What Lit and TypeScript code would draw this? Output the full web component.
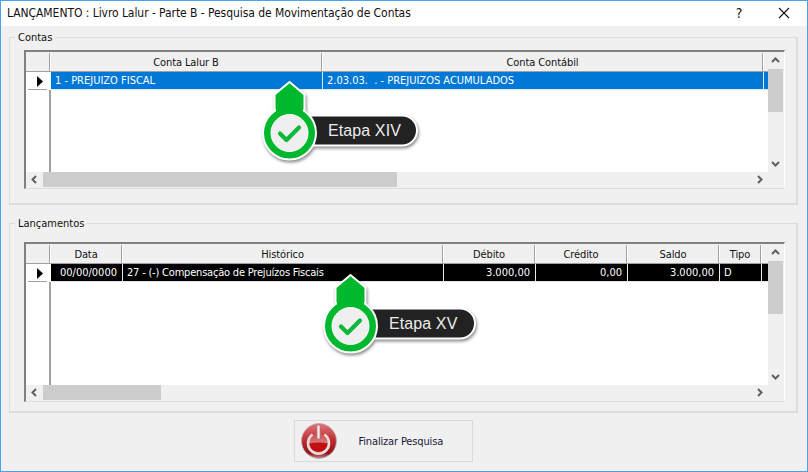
import { LitElement, html, css } from "lit";
import { customElement, property } from "lit/decorators.js";

interface Col { label: string; width: number; align?: string; value: string; tight?: boolean; }

const contas: Col[] = [
  { label: "Conta Lalur B", width: 272, value: "1 - PREJUIZO FISCAL" },
  { label: "Conta Contábil", width: 441, value: "2.03.03.\u00a0\u00a0.\u00a0- PREJUIZOS ACUMULADOS" },
];
const lanc: Col[] = [
  { label: "Data", width: 72, align: "right", value: "00/00/0000" },
  { label: "Histórico", width: 321, value: "27 - (-) Compensação de Prejuízos Fiscais", tight: true },
  { label: "Débito", width: 92, align: "right", value: "3.000,00" },
  { label: "Crédito", width: 92, align: "right", value: "0,00" },
  { label: "Saldo", width: 92, align: "right", value: "3.000,00" },
  { label: "Tipo", width: 42, value: "D" },
];

@customElement("step-tag")
class StepTag extends LitElement {
  @property() label = "";
  @property({ type: Number }) pill = 156;
  static styles = css`
    :host { display: block; position: absolute; width: 170px; height: 84px; pointer-events: none; }
    svg { position: absolute; left: 0; top: 0; overflow: visible; filter: drop-shadow(1px 2px 1.5px rgba(0,0,0,.45)); }
    .txt { position: absolute; left: 67px; top: 36px; font: 16px/29px "Liberation Sans", Arial, sans-serif; letter-spacing: .1px; color: #ececec; white-space: nowrap; }
  `;
  render() {
    const w = this.pill;
    return html`
      <svg width="170" height="84" viewBox="0 0 170 84">
        <rect x="28" y="35.5" width="${w - 28}" height="30" rx="15" fill="#222" stroke="#fff" stroke-width="2"></rect>
        <path d="M28.5 2 L43.5 14.5 V34 H13.5 V14.5 Z" fill="#00b82e" stroke="#fff" stroke-width="2" stroke-linejoin="round"></path>
        <circle cx="28.5" cy="53" r="26.5" fill="#00b82e" stroke="#fff" stroke-width="2"></circle>
        <path d="M15 15.5 L28.5 4 L42 15.5 V34 H15 Z" fill="#00b82e"></path>
        <circle cx="28.5" cy="53" r="18.5" fill="#efefef" stroke="#fff" stroke-width="1"></circle>
        <path d="M19 53.5 L25.5 60 L38 47.5" fill="none" stroke="#0cb73c" stroke-width="4.2" stroke-linecap="round" stroke-linejoin="round"></path>
      </svg>
      <span class="txt">${this.label}</span>
    `;
  }
}

@customElement("data-grid")
class DataGrid extends LitElement {
  @property({ attribute: false }) cols: Col[] = [];
  @property() rowColor = "#0078d7";
  @property({ type: Number }) hthumb = 100;
  @property({ type: Number }) vthumb = 40;
  static styles = css`
    :host { display: block; background: #fff; box-sizing: border-box; border-top: 2px solid #808080; border-left: 2px solid #808080; border-right: 1px solid #fff; border-bottom: 1px solid #dedede; font: 11px "DejaVu Sans Condensed", "DejaVu Sans", sans-serif; height: 100%; }
    .wrap { display: grid; grid-template-columns: 1fr 16px; grid-template-rows: 1fr 16px; height: 100%; }
    .cells { background: #fff; display: flex; flex-direction: column; overflow: hidden; min-width: 0; min-height: 0; }
    .hdr { display: flex; height: 19px; flex: none; background: #f0f0f0; border-bottom: 1px solid #a0a0a0; }
    .hc { box-sizing: border-box; flex: none; height: 18px; margin-top: 1px; padding-right: 2px; text-align: center; line-height: 19px; letter-spacing: -.1px; box-shadow: inset -1px 0 0 #fff, inset -2px 0 0 #a0a0a0; color: #111; white-space: nowrap; overflow: hidden; }
    .row { display: flex; height: 17px; flex: none; border-bottom: 1px solid #dfe8ef; }
    .cell { box-sizing: border-box; flex: none; height: 17px; line-height: 18px; padding: 0 5px 0 4px; border-right: 1px solid #e8e8e8; color: #fff; white-space: nowrap; overflow: hidden; }
    .cell.tight { letter-spacing: -.2px; }
    .ind { flex: none; width: 25px; box-sizing: border-box; }
    .hdr .ind { height: 18px; margin-top: 1px; box-shadow: inset -1px 0 0 #fff, inset -2px 0 0 #a0a0a0; }
    .row .ind { background: #fff; display: flex; align-items: center; justify-content: center; position: relative; padding-left: 2px; height: 18px; }
    .row .ind::after { content: ""; position: absolute; left: 2px; width: 19px; bottom: 0; height: 1px; background: #a0a0a0; }
    .fill { display: flex; flex: 1; }
    .body { flex: 1; display: flex; min-height: 0; }
    .gut { flex: none; width: 25px; box-sizing: border-box; background: #fff; box-shadow: inset -2px 0 0 #a0a0a0, inset -1px 0 0 #fff; }
    .vs, .hs, .corner { background: #f0f0f0; }
    .vs { display: flex; flex-direction: column; min-height: 0; }
    .vs .btn { height: 17px; display: flex; align-items: center; justify-content: center; flex: none; padding-right: 1px; }
    .vt { background: #cdcdcd; flex: none; margin-right: 1px; }
    .hs { display: flex; align-items: stretch; }
    .hs .btn { width: 17px; flex: none; display: flex; align-items: center; justify-content: center; padding-bottom: 1px; }
    .ht { background: #cdcdcd; flex: none; margin-bottom: 1px; }
    .sp { flex: 1; }
  `;
  chev(d: string) {
    return html`<svg width="9" height="9" viewBox="0 0 9 9"><path d="${d}" fill="none" stroke="#606060" stroke-width="2"></path></svg>`;
  }
  render() {
    return html`<div class="wrap">
      <div class="cells">
        <div class="hdr">
          <div class="ind"></div>
          ${this.cols.map((c) => html`<div class="hc" style="width:${c.width}px">${c.label}</div>`)}
        </div>
        <div class="row">
          <div class="ind"><svg width="8" height="11" viewBox="0 0 8 11"><path d="M1 0 L7 5.5 L1 11 Z" fill="#000"></path></svg></div>
          <div class="fill" style="background:${this.rowColor}">
            ${this.cols.map((c) => html`<div class="cell ${c.tight ? "tight" : ""}" style="width:${c.width}px;text-align:${c.align ?? "left"}">${c.value}</div>`)}
          </div>
        </div>
        <div class="body"><div class="gut"></div></div>
      </div>
      <div class="vs">
        <div class="btn">${this.chev("M1 6 L4.5 2.5 L8 6")}</div>
        <div class="vt" style="height:${this.vthumb}px"></div>
        <div class="sp"></div>
        <div class="btn">${this.chev("M1 3 L4.5 6.5 L8 3")}</div>
      </div>
      <div class="hs">
        <div class="btn">${this.chev("M6 1 L2.5 4.5 L6 8")}</div>
        <div class="ht" style="width:${this.hthumb}px"></div>
        <div class="sp"></div>
        <div class="btn">${this.chev("M3 1 L6.5 4.5 L3 8")}</div>
      </div>
      <div class="corner"></div>
    </div>`;
  }
}

@customElement("app-root")
export class AppRoot extends LitElement {
  static styles = css`
    :host { display: block; width: 808px; height: 472px; position: relative; overflow: hidden; font: 11px "DejaVu Sans Condensed", "DejaVu Sans", sans-serif; }
    .win { box-sizing: border-box; width: 808px; height: 472px; border: 1px solid #4ba0f0; background: #f0f0f0; display: flex; flex-direction: column; }
    .title { height: 25px; box-sizing: border-box; padding-bottom: 2px; flex: none; background: #fff; display: flex; align-items: center; padding-left: 6px; font-size: 12px; color: #111; }
    .title .t { flex: 1; white-space: nowrap; letter-spacing: -.06px; }
    .tbtn { width: 46px; display: flex; justify-content: center; align-items: center; }
    .q { font-size: 14px; color: #111; padding-left: 2px; box-sizing: border-box; }
    .content { flex: 1; display: flex; flex-direction: column; padding: 5px 9px 0 8px; min-height: 0; }
    fieldset { margin: 0; padding: 0 11px 0 14px; border: solid #dcdcdc; border-width: 1px 2px 2px 1px; min-width: 0; box-sizing: border-box; }
    legend { padding: 0 3px; margin-left: -9px; color: #111; line-height: 13px; font-size: 11px; }
    .g1 { height: 174px; flex: none; }
    .g2 { height: 196px; margin-top: 12px; flex: none; }
    .slot { height: 139px; margin-top: 6px; }
    .g2 .slot { height: 160px; margin-top: 12px; }
    .foot { flex: 1; display: flex; justify-content: center; align-items: flex-start; padding: 7px 41px 0 0; }
    .fin { box-sizing: border-box; width: 179px; height: 42px; border: 1px solid #d9d9d9; background: #f0f0f0; display: flex; align-items: center; padding-left: 6px; color: #1a1a3a; }
    .fin span { margin-left: 22px; white-space: nowrap; letter-spacing: -.15px; }
    step-tag.a { left: 261px; top: 80px; }
    step-tag.b { left: 322px; top: 273px; }
  `;
  render() {
    return html`
      <div class="win">
        <div class="title">
          <span class="t">LANÇAMENTO : Livro Lalur - Parte B - Pesquisa de Movimentação de Contas</span>
          <span class="tbtn q">?</span>
          <span class="tbtn"><svg width="12" height="12" viewBox="0 0 12 12"><path d="M1 1 L11 11 M11 1 L1 11" stroke="#111" stroke-width="1.1"></path></svg></span>
        </div>
        <div class="content">
          <fieldset class="g1"><legend>Contas</legend>
            <div class="slot"><data-grid .cols=${contas} rowColor="#0078d7" hthumb="354" vthumb="43"></data-grid></div>
          </fieldset>
          <fieldset class="g2"><legend>Lançamentos</legend>
            <div class="slot"><data-grid .cols=${lanc} rowColor="#000" hthumb="118" vthumb="53"></data-grid></div>
          </fieldset>
          <div class="foot">
            <div class="fin">
              ${this.power()}
              <span>Finalizar Pesquisa</span>
            </div>
          </div>
        </div>
      </div>
      <step-tag class="a" label="Etapa XIV" pill="156"></step-tag>
      <step-tag class="b" label="Etapa XV" pill="153"></step-tag>
    `;
  }
  power() {
    return html`<svg width="36" height="36" viewBox="0 0 36 36" style="flex:none">
      <defs>
        <linearGradient id="po" x1="0" y1="0" x2="0" y2="1"><stop offset="0" stop-color="#e0767a"></stop><stop offset=".5" stop-color="#bb2a2e"></stop><stop offset=".85" stop-color="#8e1518"></stop><stop offset="1" stop-color="#c08a8a"></stop></linearGradient>
        <linearGradient id="pu" x1="0" y1="0" x2="0" y2="1"><stop offset="0" stop-color="#c94a4e"></stop><stop offset="1" stop-color="#eaa8a8"></stop></linearGradient>
      </defs>
      <circle cx="18" cy="18" r="17.4" fill="url(#po)" stroke="#b9a3a3" stroke-width=".7"></circle>
      <circle cx="17.5" cy="20" r="10" fill="url(#pu)"></circle>
      <path d="M7.6 20.5 Q17.5 18.5 27.4 20.5 A10 10 0 0 1 7.6 20.5 Z" fill="#c20f12"></path>
      <path d="M11.6 11.5 A10.5 10.5 0 1 0 23.4 11.5" fill="none" stroke="#e9dede" stroke-width="2.6"></path>
      <rect x="15.4" y="2" width="4.2" height="14" fill="#c9686a"></rect>
      <rect x="16.3" y="2.5" width="2.4" height="13" fill="#f0e8e8"></rect>
    </svg>`;
  }
}
void StepTag; void DataGrid;
